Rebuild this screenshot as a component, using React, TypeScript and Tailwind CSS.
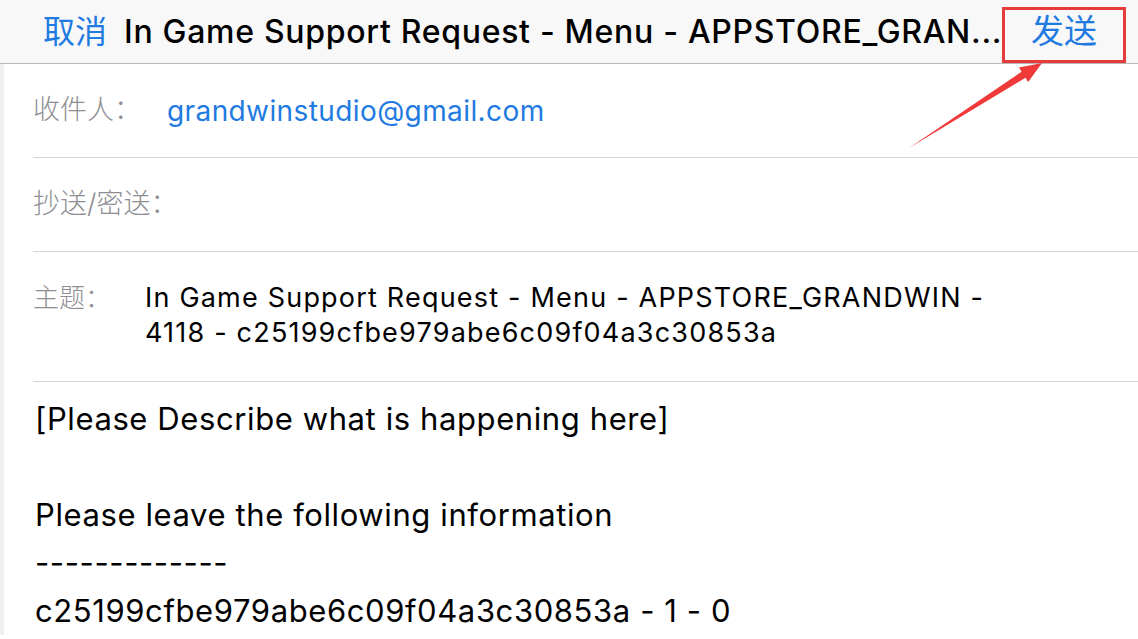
import React from 'react';

const latin = "font-['Inter','Noto_Sans_CJK_SC',sans-serif]";

function Field({ label, children }: { label: string; children?: React.ReactNode }) {
    return (
        <div className="flex h-[94px] items-center border-b border-[#d4d4d8] pr-4">
            <span className="w-[134px] shrink-0 whitespace-nowrap text-[27px] font-light text-[#8e8e93]">{label}</span>
            {children}
        </div>
    );
}

export default function App() {
    return (
        <div className={`relative h-[639px] w-[1138px] overflow-hidden bg-white ${latin}`}>
            {/* Nav bar */}
            <div className="flex h-[64px] items-center justify-between border-b border-[#b8b8b8] bg-[#f8f8f8] pl-[43px] pr-[41px]">
                <div className="flex items-center">
                    <span className="text-[32px] text-[#1f7be1]">取消</span>
                    <span className="ml-[17px] whitespace-nowrap text-[32px] font-medium tracking-[0.7px] text-black">
                        In Game Support Request - Menu - APPSTORE_GRAN...
                    </span>
                </div>
                <span className="text-[33px] text-[#1f7be1]">发送</span>
            </div>

            <div className="flex">
                <div className="w-[4px] shrink-0 bg-[#f0f0f2]" />
                <div className="flex-1">
                    <div className="pl-[29px]">
                        <Field label="收件人：">
                            <span className="text-[28px] tracking-[0.4px] text-[#1f7be1]">grandwinstudio@gmail.com</span>
                        </Field>
                        <Field label="抄送/密送：" />
                        <div className="flex border-b border-[#d4d4d8] pt-[28px] pb-[31px]">
                            <span className="w-[112px] shrink-0 text-[26px] font-light leading-[35px] text-[#8e8e93]">主题：</span>
                            <div className="text-[27px] leading-[35px] tracking-[1.2px] text-black">
                                <div>In Game Support Request - Menu - APPSTORE_GRANDWIN -</div>
                                <div>4118 - c25199cfbe979abe6c09f04a3c30853a</div>
                            </div>
                        </div>
                    </div>

                    {/* Body */}
                    <div className="pl-[31px] pt-[13px] text-[31px] leading-[48px] tracking-[0.6px] text-black">
                        <div>[Please Describe what is happening here]</div>
                        <div>&nbsp;</div>
                        <div>Please leave the following information</div>
                        <div>-------------</div>
                        <div>c25199cfbe979abe6c09f04a3c30853a - 1 - 0</div>
                    </div>
                </div>
            </div>

            {/* Annotation */}
            <div className="absolute left-[1002px] top-[7px] h-[56px] w-[124px] border-[3px] border-[#e63b3b]" />
            <svg className="absolute left-0 top-0" width="1138" height="639">
                <polygon
                    points="909,148 1021.5,71.8 1019,67.6 1042,63 1028.2,82 1025.5,77.8"
                    fill="#f03a3a"
                />
            </svg>
        </div>
    );
}
